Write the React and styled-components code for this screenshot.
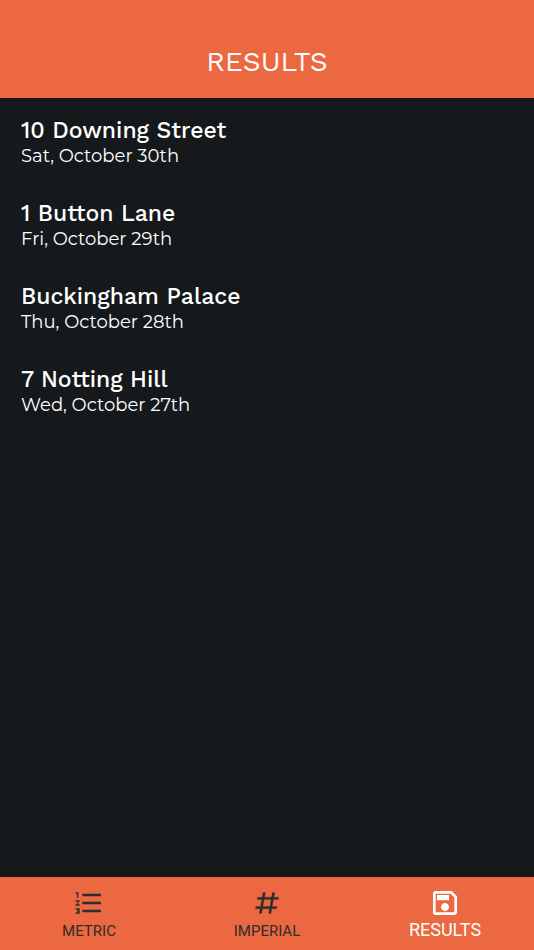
import styled, { createGlobalStyle } from "styled-components";
import { MdOutlineSave } from "react-icons/md";

const results = [
  { id: 1, name: "10 Downing Street", date: "Sat, October 30th" },
  { id: 2, name: "1 Button Lane", date: "Fri, October 29th" },
  { id: 3, name: "Buckingham Palace", date: "Thu, October 28th" },
  { id: 4, name: "7 Notting Hill", date: "Wed, October 27th" },
];

const ListIcon = () => (
  <svg width="32" height="32" viewBox="0 0 24 24" fill="currentColor" aria-hidden="true">
    <path d="M7,13V11H21V13H7M7,19V17H21V19H7M7,7V5H21V7H7M3,8V5H2V4H4V8H3M2,17V16H5V20H2V19H4V18.5H3V17.5H4V17H2M4.25,10A0.75,0.75 0 0,1 5,10.75C5,10.95 4.92,11.14 4.79,11.27L3.12,13H5V14H2V13.08L4,11H2V10H4.25Z" />
  </svg>
);

const PoundIcon = () => (
  <svg width="28" height="28" viewBox="0 0 24 24" fill="currentColor" aria-hidden="true">
    <path
      d="M5.41,21L6.12,17H2.12L2.47,15H6.47L7.53,9H3.53L3.88,7H7.88L8.59,3H10.59L9.88,7H15.88L16.59,3H18.59L17.88,7H21.88L21.53,9H17.53L16.47,15H20.47L20.12,17H16.12L15.41,21H13.41L14.12,17H8.12L7.41,21H5.41M9.53,9L8.47,15H14.47L15.53,9H9.53Z"
      stroke="currentColor"
      strokeWidth="0.2"
    />
  </svg>
);

const tabs = [
  { label: "METRIC", icon: <ListIcon /> },
  { label: "IMPERIAL", icon: <PoundIcon /> },
  { label: "RESULTS", icon: <MdOutlineSave size={32} />, active: true },
];

export default function App() {
  return (
    <>
      <GlobalStyle />
      <Screen>
        <Header>
          <Title>RESULTS</Title>
        </Header>
        <ResultList>
          {results.map(({ id, name, date }) => (
            <ResultItem key={id}>
              <ResultName>{name}</ResultName>
              <ResultDate>{date}</ResultDate>
            </ResultItem>
          ))}
        </ResultList>
        <TabBar>
          {tabs.map(({ label, icon, active }) => (
            <Tab key={label} type="button" $active={active} aria-current={active ? "page" : undefined}>
              <TabIcon>{icon}</TabIcon>
              <TabLabel $active={active}>{label}</TabLabel>
            </Tab>
          ))}
        </TabBar>
      </Screen>
    </>
  );
}

const GlobalStyle = createGlobalStyle`
  * {
    box-sizing: border-box;
  }

  body {
    margin: 0;
    background: #15191c;
  }
`;

const Screen = styled.div`
  display: flex;
  flex-direction: column;
  min-height: 100vh;
  background: #15191c;
  color: #fff;
  font-family: "Work Sans", Inter, sans-serif;
`;

const Header = styled.header`
  padding: 44px 20px 18px;
  background: #ec6841;
  text-align: center;
`;

const Title = styled.h1`
  margin: 0;
  font-size: 28px;
  font-weight: 400;
  line-height: 36px;
`;

const ResultList = styled.ul`
  flex: 1;
  display: flex;
  flex-direction: column;
  gap: 33px;
  margin: 0;
  padding: 20px 21px;
  list-style: none;
`;

const ResultItem = styled.li`
  display: flex;
  flex-direction: column;
`;

const ResultName = styled.h2`
  margin: 0;
  font-size: 23px;
  font-weight: 500;
  line-height: 26px;
`;

const ResultDate = styled.span`
  font-family: Montserrat, Inter, sans-serif;
  font-size: 18px;
  font-weight: 400;
  line-height: 24px;
`;

const TabBar = styled.nav`
  display: flex;
  background: #ec6841;
`;

const Tab = styled.button`
  flex: 1;
  display: flex;
  flex-direction: column;
  align-items: center;
  padding: 10px 0 7px;
  border: none;
  background: none;
  color: ${({ $active }) => ($active ? "#fff" : "#2b2d2e")};
  cursor: pointer;
`;

const TabIcon = styled.span`
  display: flex;
  align-items: center;
  height: 32px;
`;

const TabLabel = styled.span`
  font-family: Roboto, sans-serif;
  font-size: ${({ $active }) => ($active ? "18px" : "15px")};
  line-height: ${({ $active }) => ($active ? "22px" : "24px")};
`;
